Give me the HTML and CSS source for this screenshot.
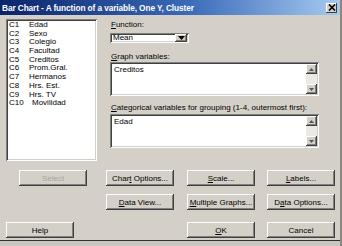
FILE: index.html
```html
<!DOCTYPE html>
<html lang="en">
<head>
    <meta charset="UTF-8">
    <title>Bar Chart - A function of a variable, One Y, Cluster</title>
    <link rel="stylesheet" href="styles.css">
</head>
<body>
    <div class="dialog">
        <div class="titlebar">
            <span class="title">Bar Chart - A function of a variable, One Y, Cluster</span>
            <span class="close">
                <svg width="8" height="7" viewBox="0 0 8 7"><path d="M1 0.5 L7 6.5 M7 0.5 L1 6.5" stroke="#000" stroke-width="1.6"/></svg>
            </span>
        </div>

        <div class="main">
            <div class="columns sunken">
                <div class="col-row"><span class="cid">C1</span><span>Edad</span></div>
                <div class="col-row"><span class="cid">C2</span><span>Sexo</span></div>
                <div class="col-row"><span class="cid">C3</span><span>Colegio</span></div>
                <div class="col-row"><span class="cid">C4</span><span>Facultad</span></div>
                <div class="col-row"><span class="cid">C5</span><span>Creditos</span></div>
                <div class="col-row"><span class="cid">C6</span><span>Prom.Gral.</span></div>
                <div class="col-row"><span class="cid">C7</span><span>Hermanos</span></div>
                <div class="col-row"><span class="cid">C8</span><span>Hrs. Est.</span></div>
                <div class="col-row"><span class="cid">C9</span><span>Hrs. TV</span></div>
                <div class="col-row"><span class="cid">C10</span><span class="wide">Movilidad</span></div>
            </div>

            <div class="fields">
                <label class="lbl lbl-func"><u>F</u>unction:</label>
                <div class="combo sunken">
                    <span class="combo-text">Mean</span>
                    <span class="combo-btn raised">
                        <svg width="7" height="4" viewBox="0 0 7 4"><path d="M0 0 H7 L3.5 4 Z" fill="#000"/></svg>
                    </span>
                </div>

                <label class="lbl lbl-graph"><u>G</u>raph variables:</label>
                <div class="textbox sunken">
                    <span class="textbox-text">Creditos</span>
                    <div class="scroll">
                        <span class="sbtn raised"><svg width="5" height="3" viewBox="0 0 5 3"><path d="M0 3 H5 L2.5 0 Z" fill="#555"/></svg></span>
                        <span class="strack"></span>
                        <span class="sbtn raised"><svg width="5" height="3" viewBox="0 0 5 3"><path d="M0 0 H5 L2.5 3 Z" fill="#555"/></svg></span>
                    </div>
                </div>

                <label class="lbl lbl-cat"><u>C</u>ategorical variables for grouping (1-4, outermost first):</label>
                <div class="textbox sunken">
                    <span class="textbox-text">Edad</span>
                    <div class="scroll">
                        <span class="sbtn raised"><svg width="5" height="3" viewBox="0 0 5 3"><path d="M0 3 H5 L2.5 0 Z" fill="#555"/></svg></span>
                        <span class="strack"></span>
                        <span class="sbtn raised"><svg width="5" height="3" viewBox="0 0 5 3"><path d="M0 0 H5 L2.5 3 Z" fill="#555"/></svg></span>
                    </div>
                </div>
            </div>
        </div>

        <div class="buttons">
            <button class="btn btn-select" disabled>Select</button>
            <button class="btn">Char<u>t</u> Options...</button>
            <button class="btn"><u>S</u>cale...</button>
            <button class="btn"><u>L</u>abels...</button>

            <span></span>
            <button class="btn"><u>D</u>ata View...</button>
            <button class="btn"><u>M</u>ultiple Graphs...</button>
            <button class="btn">D<u>a</u>ta Options...</button>

            <button class="btn btn-help">Help</button>
            <span></span>
            <button class="btn"><u>O</u>K</button>
            <button class="btn">Cancel</button>
        </div>

        <div class="bottom-strip"></div>
    </div>
</body>
</html>
```

FILE: styles.css
```css
* {
    box-sizing: border-box;
    margin: 0;
    padding: 0;
}

body {
    background-color: #d4d0c8;
    font-family: 'Liberation Sans', Arial, sans-serif;
    font-size: 8px;
    color: #000;
}

.dialog {
    width: 342px;
    height: 246px;
    background-color: #d4d0c8;
    border-right: 2px solid #8a8782;
    overflow: hidden;
    position: relative;
}

/* title bar */
.titlebar {
    height: 15px;
    display: flex;
    align-items: center;
    justify-content: space-between;
    padding: 0 3px 0 2px;
    background: linear-gradient(to right, #0a246a 0%, #3a6ab8 55%, #a6caf0 100%);
}

.title {
    color: #fff;
    font-weight: bold;
    font-size: 8.3px;
    letter-spacing: -0.1px;
}

.close {
    width: 11px;
    height: 10px;
    display: flex;
    align-items: center;
    justify-content: center;
    background-color: #d4d0c8;
    box-shadow: inset -1px -1px #404040, inset 1px 1px #fff;
}

/* 3d borders */
.sunken {
    background-color: #fff;
    box-shadow: inset 1px 1px #808080, inset -1px -1px #fff, inset 2px 2px #404040, inset -2px -2px #d4d0c8;
}

.raised {
    background-color: #d4d0c8;
    box-shadow: inset -1px -1px #404040, inset 1px 1px #fff, inset -2px -2px #808080;
}

.main {
    display: flex;
    padding: 4px 0 0 6px;
    gap: 13px;
}

/* column list */
.columns {
    width: 91px;
    height: 142px;
    padding: 2px 0 0 3px;
}

.col-row {
    display: flex;
    height: 8.7px;
    line-height: 8.7px;
    white-space: nowrap;
}

.cid {
    width: 20px;
}

.wide {
    margin-left: 3px;
}

/* right side */
.fields {
    width: 209px;
    display: flex;
    flex-direction: column;
}

.lbl {
    display: block;
    white-space: nowrap;
    line-height: 10px;
    height: 10px;
    padding-left: 1px;
}

.lbl-func {
    margin-top: 1px;
    margin-bottom: 3px;
}

.lbl-graph {
    margin-top: 9px;
}

.lbl-cat {
    margin-top: 7px;
    margin-bottom: 1px;
}

.combo {
    width: 79px;
    height: 10px;
    display: flex;
    align-items: center;
    justify-content: space-between;
    padding: 1px 2px 1px 2px;
    line-height: 8px;
}

.combo-text {
    padding-left: 1px;
}

.combo-btn {
    width: 12px;
    height: 8px;
    display: flex;
    align-items: center;
    justify-content: center;
}

.textbox {
    height: 34px;
    display: flex;
    justify-content: space-between;
    padding: 2px;
}

.textbox-text {
    padding: 1px 0 0 2px;
    line-height: 9px;
}

.scroll {
    width: 11px;
    display: flex;
    flex-direction: column;
}

.sbtn {
    height: 10px;
    display: flex;
    align-items: center;
    justify-content: center;
}

.strack {
    flex: 1;
    background-color: #ebe9e4;
}

/* buttons */
.buttons {
    display: grid;
    grid-template-columns: 100px 81px 80px 69px;
    grid-template-rows: 16px 16px 16px;
    row-gap: 8px;
    padding-left: 6px;
    margin-top: 9px;
}

.buttons .btn:nth-child(n+9) {
    margin-top: 4px;
}

.btn {
    width: 68px;
    height: 16px;
    font-family: 'Liberation Sans', Arial, sans-serif;
    font-size: 8px;
    color: #000;
    border: none;
    background-color: #d4d0c8;
    box-shadow: inset -1px -1px #404040, inset 1px 1px #fff, inset -2px -2px #808080;
}

.btn-select {
    margin-left: 13px;
    color: #a8a59f;
}

.btn-help {
    margin-left: 0;
}

.bottom-strip {
    position: absolute;
    left: 0;
    right: 0;
    bottom: 0;
    height: 6px;
    border-top: 1px solid #303030;
    background-color: #c9c6bf;
}
```
